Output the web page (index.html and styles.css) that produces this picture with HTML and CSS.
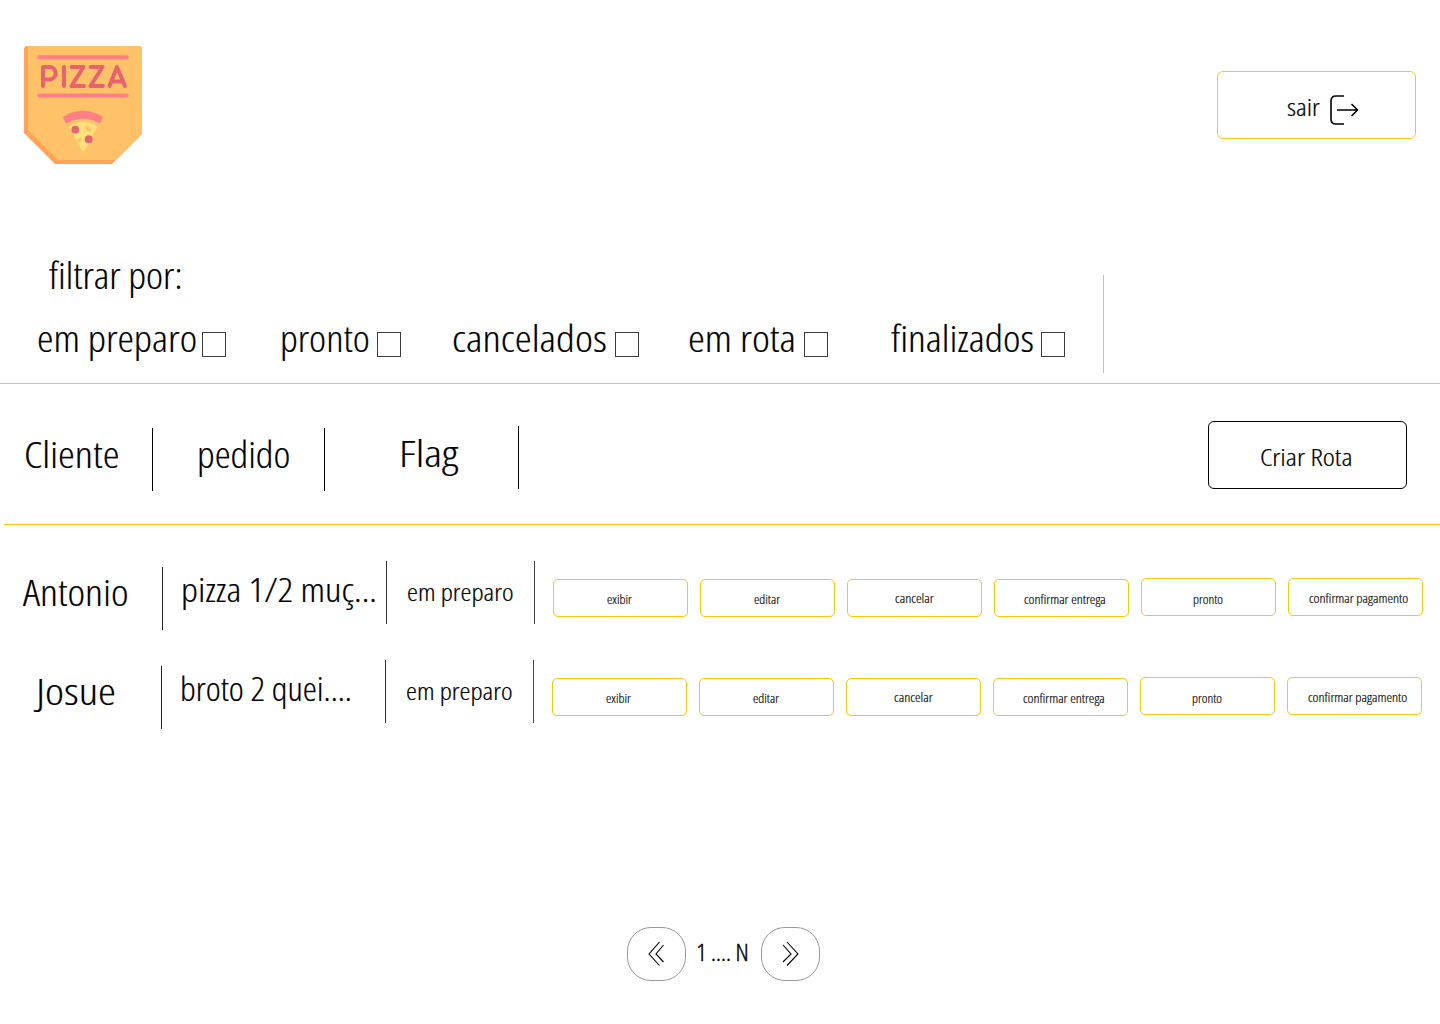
FILE: index.html
```html
<!DOCTYPE html>
<html lang="pt-BR">
<head>
<meta charset="utf-8">
<title>Pedidos</title>
<link rel="stylesheet" href="styles.css">
</head>
<body>
<header class="top">
  <svg class="logo" viewBox="0 0 118 118" role="img" aria-label="Pizza">
    <path fill="#ffa45b" d="M2 0H116L118 2V88L88 118H31L0 87V2Z"/>
    <path fill="#ffc269" d="M4 0H116L118 2V88L92 114H34L4 84Z"/>
    <path stroke="#ff7f86" stroke-width="4" stroke-linecap="round" d="M15.300 11.300H102.700M15.300 49.500H102.700"/>
    <g fill="none" stroke="#e5646e" stroke-width="4" stroke-linecap="round" stroke-linejoin="round">
      <path d="M19 40V21H25.500A6.200 6.200 0 0 1 25.500 33.500H19M40 21V40M47.500 21H59.500L47.500 40H60M66.500 21H78.500L66.500 40H79M85.500 40L93 21L101 40M88.500 35.500H98"/>
    </g>
    <path fill="#ffe07d" d="M44.500 80.500Q59 71.500 73.500 80.500L61 104Q59 106 57.500 104L54.500 98Z"/>
    <path fill="#ffc269" d="M53 94.500Q54.500 91 57 92.500Q58 94.500 55.500 97Z"/>
    <path stroke="#ffc269" stroke-width="4" stroke-linecap="round" d="M62.500 81.500L65.500 84"/>
    <path fill="#ff7f86" d="M39 71Q59 58 79 71L76.500 76.500Q75.500 77.500 74 76.500Q59 69 44 76.500Q42.500 77.500 41.500 76.500Z"/>
    <circle cx="51.300" cy="83.700" r="3.900" fill="#e5646e"/>
    <circle cx="64.700" cy="93.200" r="3.900" fill="#e5646e"/>
  </svg>
  <button class="btn btn-exit"><span class="txt">sair</span>
    <svg class="exit-icon" viewBox="0 0 30 32"><path d="M15 2H7Q2 2 2 7V25Q2 30 7 30H15M8 16H28.500M22.500 10L28.500 16L22.500 22"/></svg>
  </button>
</header>

<section class="filters">
  <div class="filter-body">
    <h2 class="txt">filtrar por:</h2>
    <div class="options">
      <label class="opt o1"><span class="txt">em preparo</span><i class="box"></i></label>
      <label class="opt o2"><span class="txt">pronto</span><i class="box"></i></label>
      <label class="opt o3"><span class="txt">cancelados</span><i class="box"></i></label>
      <label class="opt o4"><span class="txt">em rota</span><i class="box"></i></label>
      <label class="opt o5"><span class="txt">finalizados</span><i class="box"></i></label>
    </div>
  </div>
</section>

<section class="columns">
  <div class="col c1"><span class="txt">Cliente</span></div>
  <div class="col c2"><span class="txt">pedido</span></div>
  <div class="col c3"><span class="txt">Flag</span></div>
  <button class="btn btn-route"><span class="txt">Criar Rota</span></button>
</section>

<main class="orders">
  <article class="order">
    <div class="client antonio"><span class="txt">Antonio</span></div>
    <div class="item pizza"><span class="txt">pizza 1/2 muç...</span></div>
    <div class="state"><span class="txt">em preparo</span></div>
    <div class="actions">
      <button class="btn a1"><span class="txt">exibir</span></button>
      <button class="btn a2"><span class="txt">editar</span></button>
      <button class="btn a3"><span class="txt">cancelar</span></button>
      <button class="btn a4"><span class="txt">confirmar entrega</span></button>
      <button class="btn a5"><span class="txt">pronto</span></button>
      <button class="btn a6"><span class="txt">confirmar pagamento</span></button>
    </div>
  </article>
  <article class="order second">
    <div class="client josue"><span class="txt">Josue</span></div>
    <div class="item broto"><span class="txt">broto 2 quei....</span></div>
    <div class="state"><span class="txt">em preparo</span></div>
    <div class="actions">
      <button class="btn a1"><span class="txt">exibir</span></button>
      <button class="btn a2"><span class="txt">editar</span></button>
      <button class="btn a3"><span class="txt">cancelar</span></button>
      <button class="btn a4"><span class="txt">confirmar entrega</span></button>
      <button class="btn a5"><span class="txt">pronto</span></button>
      <button class="btn a6"><span class="txt">confirmar pagamento</span></button>
    </div>
  </article>
</main>

<nav class="pager">
  <button class="page prev"><svg viewBox="0 0 18 26"><path d="M12.500 1L2 13L12.500 24.500M16.500 4L9 13L16.500 21"/></svg></button>
  <span class="txt range">1 .... N</span>
  <button class="page next"><svg viewBox="0 0 18 26"><path d="M5 1L16 13L5 24.500M1 4L9 13L1 21"/></svg></button>
</nav>
</body>
</html>
```
FILE: styles.css
```css
* { box-sizing: border-box; }
body {
  margin: 0;
  width: 1440px;
  height: 1024px;
  overflow: hidden;
  background: #fff;
  color: #000;
  font-family: "Open Sans", "Noto Sans", sans-serif;
  font-weight: 300;
  font-stretch: 75%;
  font-size: 37.500px;
  line-height: 48px;
}
.txt {
  display: block;
  flex: none;
  white-space: nowrap;
  transform: scaleX(var(--sx, 1));
  transform-origin: 0 50%;
  -webkit-text-stroke: 0.2px currentColor;
}
svg { display: block; flex: none; fill: none; }
h2 { margin: 0; font-size: inherit; font-weight: inherit; }
.btn {
  display: flex;
  align-items: flex-start;
  margin: 0;
  padding: 0;
  border: 1px solid #fcc60e;
  border-radius: 6px;
  background: #fff;
  color: inherit;
  font: inherit;
  font-stretch: inherit;
  font-size: 24.500px;
  line-height: 32px;
}

.top {
  display: flex;
  justify-content: space-between;
  align-items: flex-start;
  height: 248px;
  padding: 46px 24px 0;
}
.logo { width: 118px; height: 118px; }
.btn-exit {
  width: 199px;
  height: 68px;
  margin-top: 25px;
  padding: 19px 0 0 69px;
}
.btn-exit .txt { --sx: 1.14; width: 42px; text-align: left; }
.exit-icon { width: 30px; height: 32px; margin-top: 3px; stroke: #000; stroke-width: 1.600; }

.filters { height: 136px; padding-top: 1px; border-bottom: 1px solid #fcc60e; }
.filter-body {
  width: 1104px;
  height: 98px;
  margin-top: 26px;
  border-right: 1px solid #fcc60e;
}
.filter-body h2 { --sx: 1.085; height: 39px; margin-left: 49px; line-height: 0; }
.options { display: flex; padding-left: 37px; height: 48px; }
.opt { display: flex; align-items: flex-start; }
.o1 .txt { --sx: 1.11; width: 165px; }
.o2 { margin-left: 54px; }
.o2 .txt { --sx: 1.085; width: 97px; }
.o3 { margin-left: 51px; }
.o3 .txt { --sx: 1.145; width: 163px; }
.o4 { margin-left: 49px; }
.o4 .txt { --sx: 1.14; width: 116px; }
.o5 { margin-left: 63px; }
.o5 .txt { --sx: 1.11; width: 150px; }
.box { width: 24px; height: 25px; margin-top: 18px; border: 1px solid #3c3c3c; }

.columns {
  display: flex;
  align-items: flex-start;
  height: 141px;
  margin-left: 4px;
  border-bottom: 1px solid #fcc60e;
}
.col { height: 63px; margin-top: 44px; padding-top: 2px; border-right: 1px solid #000; }
.c1 { --sx: 1.135; width: 149px; padding-left: 20px; }
.c2 { --sx: 1.075; width: 172px; padding-left: 44px; }
.c3 { --sx: 1.235; width: 194px; margin-top: 42px; padding: 3px 0 0 74px; }
.btn-route {
  --sx: 1.18;
  width: 199px;
  height: 68px;
  margin: 37px 33px 0 auto;
  padding: 19px 0 0 51px;
  border-color: #000;
}

.orders { height: 373px; padding-top: 36px; }
.order { display: flex; align-items: flex-start; height: 99px; }
.second { margin-left: -1px; }
.client { width: 163px; height: 63px; margin-top: 6px; padding-top: 1px; border-right: 1px solid #222; }
.antonio { --sx: 1.12; padding-left: 23px; }
.josue { --sx: 1.21; padding-left: 37px; }
.item { width: 224px; height: 63px; padding: 5px 0 0 18px; border-right: 1px solid #333; font-size: 33px; }
.pizza { --sx: 1.17; }
.broto { --sx: 1.085; }
.state { --sx: 1.13; width: 148px; height: 63px; padding: 15px 0 0 20px; border-right: 1px solid #444; font-size: 24.500px; line-height: 32px; }
.actions { display: flex; gap: 12px; margin: 18px 0 0 18px; }
.actions .btn {
  width: 135px;
  height: 38px;
  border-radius: 5px;
  font-size: 12px;
  line-height: 16px;
  padding-top: 12px;
  color: #111;
}
.actions .a1 { --sx: 1.13; padding-left: 53px; }
.actions .a2 { --sx: 1.13; padding-left: 53px; }
.actions .a3 { --sx: 1.19; padding: 11px 0 0 47px; }
.actions .a4 { --sx: 1.175; padding-left: 29px; }
.actions .a5 { --sx: 1.13; padding: 13px 0 0 51px; margin-top: -1px; }
.actions .a6 { --sx: 1.18; padding-left: 20px; margin-top: -1px; }

.pager { display: flex; align-items: flex-start; margin-left: 627px; padding-top: 29px; }
.page {
  display: flex;
  width: 59px;
  height: 54px;
  padding: 13px 0 0 20px;
  border: 1px solid #999;
  border-radius: 24px;
  background: #fff;
}
.page svg { width: 18px; height: 26px; stroke: #000; stroke-width: 1.100; }
.page.prev { padding-left: 19px; }
.range { --sx: 1.02; width: 75px; padding-left: 10px; font-size: 24.500px; line-height: 32px; margin-top: 9px; -webkit-text-stroke-width: 0.4px; }
```
